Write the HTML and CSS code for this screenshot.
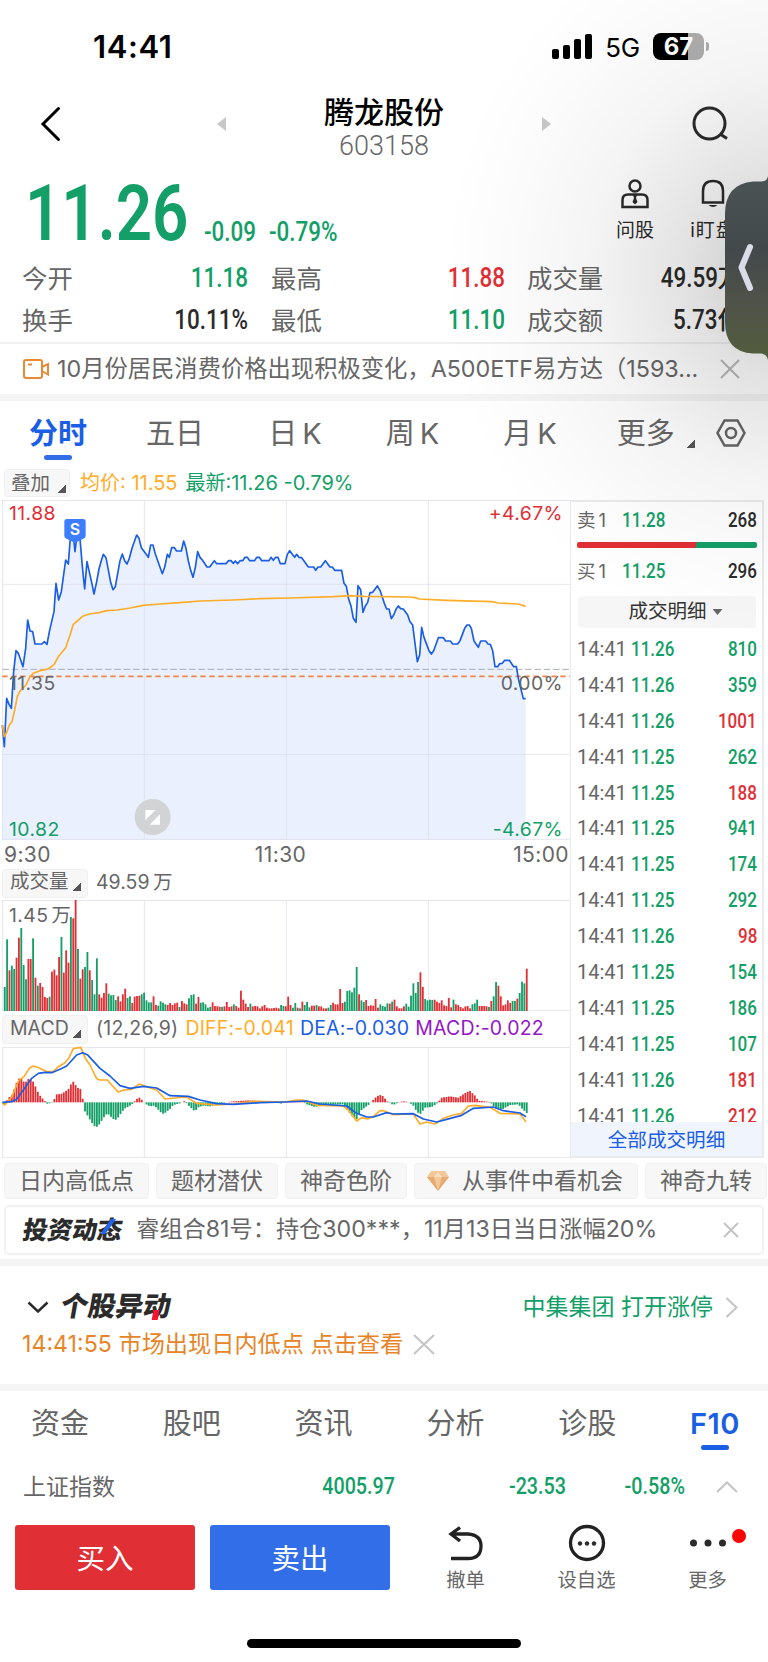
FILE: index.html
```html
<!DOCTYPE html>
<html lang="zh-CN">
<head>
<meta charset="UTF-8">
<title>腾龙股份 603158</title>
<link rel="stylesheet" href="styles.css">
</head>
<body>
<div class="phone">
  <!-- ============  Status bar  ============ -->
  <div class="status">
    <span class="clock">14:41</span>
    <div class="signal"><i></i><i></i><i></i><i></i></div>
    <span class="net">5G</span>
    <div class="battery"><span>67</span></div>
    <i class="battery-tip"></i>
  </div>

  <!-- ============  Title  ============ -->
  <header class="head">
    <svg class="back" width="22" height="36" viewBox="0 0 22 36"><path d="M18.500 2.500 L3 18 L18.500 33.500"/></svg>
    <i class="prev"></i>
    <div class="title">
      <h1>腾龙股份</h1>
      <span>603158</span>
    </div>
    <i class="next"></i>
    <svg class="search" width="38" height="36" viewBox="0 0 38 36"><circle cx="17.500" cy="17.500" r="15.500"/><path d="M28 28 L35 32.500"/></svg>
  </header>

  <!-- ============  Quote  ============ -->
  <section class="quote">
    <div class="price-row">
      <b class="price din">11.26</b>
      <span class="chg din">-0.09</span>
      <span class="chg din">-0.79%</span>
      <div class="tools">
        <div class="tool">
          <svg width="28" height="30" viewBox="0 0 28 30"><circle cx="14" cy="7" r="5.500"/><path d="M1.500 28 V21 Q1.500 15.500 7 15.500 H21 Q26.500 15.500 26.500 21 V28 Z"/><path class="solid" d="M12 16h4l-1 3 1.500 4L14 25.500 11.500 23 13 19z"/></svg>
          <span>问股</span>
        </div>
        <div class="tool">
          <svg width="28" height="30" viewBox="0 0 28 30"><path d="M4 23.500 V12 Q4 2 14 2 Q24 2 24 12 V23.500 Z"/><path class="solid" d="M9.500 26h9q-4.500 4-9 0z"/></svg>
          <span class="watch">i盯盘</span>
        </div>
      </div>
    </div>
    <div class="stats">
      <span>今开</span><b class="din down">11.18</b>
      <span>最高</span><b class="din up">11.88</b>
      <span>成交量</span><b><i class="din">49.59</i>万</b>
      <span>换手</span><b class="din">10.11%</b>
      <span>最低</span><b class="din down">11.10</b>
      <span>成交额</span><b><i class="din">5.73</i>亿</b>
    </div>
  </section>

  <div class="news">
    <svg width="27" height="20" viewBox="0 0 27 20"><rect x="1" y="1" width="18" height="18" rx="2"/><path d="M5 5.500h4M19 8 L25 5 V15.500 L19 12"/></svg>
    <p>10月份居民消费价格出现积极变化，A500ETF易方达（1593...</p>
    <svg class="close" width="20" height="20" viewBox="0 0 20 20"><path d="M1 1 L19 19 M19 1 L1 19"/></svg>
  </div>
  <div class="band"></div>

  <!-- ============  Chart tabs  ============ -->
  <nav class="tabs periods">
    <a class="on">分时</a><a>五日</a><a>日<em>K</em></a><a>周<em>K</em></a><a>月<em>K</em></a>
    <a class="more">更多<i class="corner"></i></a>
    <svg width="30" height="28" viewBox="0 0 30 28"><path d="M8.500 1.500 H21.500 L28.500 14 L21.500 26.500 H8.500 L1.500 14 Z"/><circle cx="15" cy="14" r="5"/></svg>
  </nav>
  <div class="legend">
    <span class="pill overlay">叠加<i class="corner"></i></span>
    <span class="avg">均价: 11.55</span>
    <span class="down">最新:11.26 -0.79%</span>
  </div>

  <!-- ============  Charts + trades  ============ -->
  <div class="market">
    <div class="charts">
      <svg class="chart price-chart" viewBox="0 15 1713 1020">
        <polygon id="area" class="area"/>
        <path class="grid" d="M7 16.500H1713M7 268H1713M7 778H1713M7 1033H1713M8 15V1035M433 15V1035M859 15V1035M1285 15V1035"/>
        <path class="mid" d="M7 523H1713"/>
        <path class="prev-close" d="M7 544H1713"/>
        <polyline id="price" class="line blue"/>
        <polyline class="line orange" points="7,690 13,725 20,712 28,690 36,680 44,645 52,605 60,588 78,570 90,545 100,535 120,527 141,523 152,517 163,507 175,485 197,458 210,420 220,388 232,378 248,364 268,357 297,353 320,347 352,345 390,339 430,331 480,327 540,323 600,318 700,315 780,311 870,309 1000,305 1050,302 1090,304 1230,306 1245,308 1258,312 1340,316 1475,320 1495,324 1555,327 1577,334"/>
        <path class="flag" d="M201 72H249Q257 72 257 80V122Q257 129 250 131L225 144L200 131Q193 129 193 122V80Q193 72 201 72Z"/>
        <text class="flag-text" x="225" y="120" text-anchor="middle">S</text>
        <text class="t" x="27" y="586">11.35</text>
        <text class="t up" x="27" y="74">11.88</text>
        <text class="t down" x="27" y="1023">10.82</text>
        <text class="t up" x="1689" y="74" text-anchor="end">+4.67%</text>
        <text class="t" x="1689" y="586" text-anchor="end">0.00%</text>
        <text class="t down" x="1689" y="1023" text-anchor="end">-4.67%</text>
        <circle class="zoom-bg" cx="458" cy="966" r="54"/>
        <path class="zoom-icon" d="M436 945H467L436 976ZM480 958V989H449Z"/>
      </svg>
      <div class="axis"><span>9:30</span><span>11:30</span><span>15:00</span></div>

      <div class="sub-head vol-head">
        <span class="pill">成交量<i class="corner"></i></span><span>49.59 万</span>
      </div>
      <svg class="chart vol-chart" viewBox="0 480 1713 333">
        <path class="grid" d="M7 481.500H1713M7 811.500H1713M8 480V813M433 480V813M859 480V813M1285 480V813"/>
        <text class="t" x="27" y="545">1.45 万</text>
        <g id="volume"></g>
      </svg>

      <div class="sub-head macd-head">
        <span class="pill">MACD<i class="corner"></i></span><span>(12,26,9)</span>
        <span class="avg">DIFF:-0.041</span><span class="dea">DEA:-0.030</span><span class="macd">MACD:-0.022</span>
      </div>
      <svg class="chart macd-chart" viewBox="0 921 1713 333">
        <path class="grid" d="M7 922.500H1713M7 1252H1713M8 921V1253M433 921V1253M859 921V1253M1285 921V1253"/>
        <g id="macd"></g>
        <polyline class="line orange" points="7,1087 14,1095 25,1083 36,1070 43,1052 57,1020 72,1010 88,985 100,978 118,984 140,995 160,995 175,980 195,968 207,953 220,926 242,922 256,955 270,975 290,1016 300,1020 322,1020 354,1056 372,1050 395,1048 418,1032 440,1040 470,1050 495,1077 525,1074 560,1071 590,1090 650,1095 700,1092 760,1084 855,1086 890,1080 910,1080 950,1096 1030,1098 1045,1110 1070,1143 1085,1133 1102,1137 1120,1130 1140,1112 1150,1112 1180,1124 1240,1122 1260,1152 1280,1146 1305,1152 1330,1135 1360,1125 1385,1120 1405,1098 1425,1096 1470,1102 1500,1120 1560,1122 1578,1146"/>
        <polyline class="line blue" points="7,1087 35,1085 50,1078 70,1050 95,1015 115,1000 135,997 155,998 180,988 200,978 230,945 248,938 262,944 300,985 330,1008 360,1037 390,1045 430,1039 470,1044 510,1067 565,1069 600,1080 650,1091 700,1093 780,1088 855,1086 920,1083 960,1092 1040,1098 1070,1120 1100,1131 1120,1131 1160,1118 1180,1122 1240,1121 1270,1137 1310,1146 1340,1138 1385,1126 1420,1105 1480,1101 1510,1112 1560,1119 1578,1130"/>
      </svg>
    </div>

    <aside class="side">
      <div class="level"><span>卖1</span><b class="din left down">11.28</b><b class="din">268</b></div>
      <div class="ratio"></div>
      <div class="level buy"><span>买1</span><b class="din left down">11.25</b><b class="din">296</b></div>
      <div class="detail">成交明细<i></i></div>
      <div class="trades" id="trades"></div>
      <a class="all">全部成交明细</a>
    </aside>
  </div>

  <div class="chips">
    <span>日内高低点</span><span>题材潜伏</span><span>神奇色阶</span>
    <span><svg width="22" height="20" viewBox="0 0 22 20"><path fill="#f3c797" d="M4 0h14l4 6-11 14L0 6z"/><path fill="#e5aa71" d="M0 6h7l4 14zM15 6h7L11 20z"/><path fill="#fbe0bd" d="M7 6l4-5 4 5z"/></svg>从事件中看机会</span>
    <span>神奇九转</span>
  </div>

  <div class="notice">
    <b class="logo invest">投资动态</b>
    <p>睿组合81号：持仓300***，11月13日当日涨幅20%</p>
    <svg class="close" width="16" height="16" viewBox="0 0 16 16"><path d="M1 1 L15 15 M15 1 L1 15"/></svg>
  </div>
  <div class="band"></div>

  <!-- ============  Unusual moves  ============ -->
  <section class="moves">
    <div class="moves-row">
      <svg width="22" height="12" viewBox="0 0 22 12"><path d="M1.500 1.500 L11 10.500 L20.500 1.500"/></svg>
      <b class="logo unusual">个股异动</b>
      <span class="down">中集集团 打开涨停</span>
      <svg class="close" width="13" height="21" viewBox="0 0 13 21"><path d="M1.500 1 L11.500 10.500 L1.500 20"/></svg>
    </div>
    <div class="alert">
      14:41:55 市场出现日内低点 点击查看
      <svg class="close" width="22" height="21" viewBox="0 0 22 21"><path d="M1 1 L21 20 M21 1 L1 20"/></svg>
    </div>
  </section>
  <div class="band"></div>

  <nav class="tabs info">
    <a>资金</a><a>股吧</a><a>资讯</a><a>分析</a><a>诊股</a><a class="on">F10</a>
  </nav>
  <div class="index-row">
    <span>上证指数</span>
    <b class="din down">4005.97</b><b class="din down">-23.53</b><b class="din down">-0.58%</b>
    <svg class="close" width="22" height="12" viewBox="0 0 22 12"><path d="M1 11 L11 1.500 L21 11"/></svg>
  </div>

  <!-- ============  Bottom actions  ============ -->
  <footer class="actions">
    <button class="buy-btn">买入</button>
    <button class="sell-btn">卖出</button>
    <div class="act">
      <svg width="38" height="38" viewBox="0 0 38 38"><path d="M13 3.500 L4 10 L13 17 M4 10 H21 Q34 11 34 22 Q34 34.500 21 34.500 H4"/></svg>
      <span>撤单</span>
    </div>
    <div class="act">
      <svg width="38" height="38" viewBox="0 0 38 38"><circle cx="19" cy="19" r="16.500"/><g class="solid"><circle cx="12" cy="19.500" r="2.200"/><circle cx="19" cy="19.500" r="2.200"/><circle cx="26" cy="19.500" r="2.200"/></g></svg>
      <span>设自选</span>
    </div>
    <div class="act">
      <svg width="38" height="38" viewBox="0 0 38 38"><g class="solid"><circle cx="4.500" cy="19" r="3.500"/><circle cx="19" cy="19" r="3.500"/><circle cx="33.500" cy="19" r="3.500"/></g></svg>
      <span>更多</span>
      <i class="badge"></i>
    </div>
  </footer>
  <div class="home"></div>

  <!-- floating drawer handle on the right edge -->
  <div class="shade"></div>
  <svg class="drawer" width="43" height="184" viewBox="0 0 43 184">
    <defs><linearGradient id="dg" x1="0" y1="0" x2="0" y2="1"><stop offset="0" stop-color="#4a5354"/><stop offset=".4" stop-color="#43494b"/><stop offset=".7" stop-color="#505349"/><stop offset="1" stop-color="#525d3c"/></linearGradient></defs>
    <path fill="url(#dg)" d="M43 0 Q42 5.500 36 5.500 H28 Q0 8 0 38 V146 Q0 176 28 177.500 H36 Q42 178 43 184Z"/>
    <path class="handle" d="M25 71 L16.500 91.500 L25 112"/>
  </svg>
</div>

<script src="script.js"></script>
</body>
</html>
```
FILE: styles.css
```css
/* base */
*{ box-sizing:border-box }
body{
  margin:0;
  background:#fff;
  color:#666;
  font-family: Inter, "Noto Sans CJK SC", sans-serif;
  line-height:1;
}
h1, p{ margin:0; font-weight:400 }
i, em{ font-style:normal }
svg{ display:block; flex:none; fill:none }
.phone{
  position:relative;
  width:768px;
  height:1662px;
  overflow:hidden;
}
.up{ color:#e12f35; fill:#e12f35 }
.down{ color:#139f67; fill:#139f67 }
.avg{ color:#ffac27 }
.dea{ color:#1a5ee6 }
.macd{ color:#9416c7 }

/* narrow digits */
.din{
  display:inline-block;
  font-family: Roboto, sans-serif;
  font-weight:500;
  transform:scaleX(.83);
  transform-origin:right;
}
.left{ transform-origin:left }
.close{ stroke:#c4c4c4; stroke-width:2 }
.band{ height:7px; background:#f4f4f5 }

/* small triangle in the bottom right of a button */
.corner{
  width:8px;
  height:8px;
  background:linear-gradient(135deg, transparent 50%, #555 50%);
}

/* status bar */
.status{
  display:flex;
  align-items:center;
  height:92px;
  padding:0 59px 0 93px;
  color:#000;
}
.clock{ font-size:31px; font-weight:600; letter-spacing:.6px; margin-right:auto }
.signal{ display:flex; align-items:flex-end; gap:4px; height:25px }
.signal i{ width:7px; height:10px; border-radius:2px; background:#000 }
.signal i:nth-child(2){ height:14px }
.signal i:nth-child(3){ height:20px }
.signal i:nth-child(4){ height:25px }
.net{ font-size:26px; margin:3px 13px 0 13px; letter-spacing:-.2px }
.battery{
  width:51px;
  height:27px;
  border-radius:8px;
  background:linear-gradient(90deg, #000 68%, #aeaeae 68%);
  color:#fff;
  font-size:24px;
  font-weight:700;
  line-height:27px;
  text-align:center;
}
.battery-tip{ width:3px; height:9px; margin-left:2px; border-radius:0 3px 3px 0; background:#aeaeae }

/* header */
.head{
  display:flex;
  align-items:center;
  height:78px;
  padding:0 38px 0 40px;
}
.back{ stroke:#000; stroke-width:3; margin-top:-15px; stroke-linecap:round }
.search{ stroke:#2b2b2b; stroke-width:3; margin-top:-15px; margin-left:auto }
.prev, .next{
  width:9px;
  height:14px;
  margin-top:-14px;
  background:#c8c8c8;
  clip-path:polygon(100% 0, 100% 100%, 0 50%);
}
.prev{ margin-left:155px }
.next{ margin-left:98px; clip-path:polygon(0 0, 100% 50%, 0 100%) }
.title{ width:120px; margin-left:98px; text-align:center; white-space:nowrap; margin-top:-5px }
.title h1{ font-size:30px; font-weight:500; color:#000; margin-bottom:6px }
.title span{ font-family:Roboto, sans-serif; font-size:27px; font-weight:300; letter-spacing:0 }

/* quote */
.quote{ height:174px; border-bottom:2px solid #f0f0f0 }
.price-row{ display:flex; align-items:flex-end; height:85px; padding-left:25px }
.price{
  width:179px;
  font-size:78px;
  font-weight:600;
  color:#139f67;
  transform:scaleX(.815);
  transform-origin:left;
  margin-bottom:2px;
}
.chg{
  font-size:27px;
  color:#139f67;
  transform-origin:left;
  margin-bottom:9px;
  width:65px;
}
.tools{ display:flex; gap:40px; margin-left:282px; align-self:flex-start; padding-top:9px }
.tool{
  width:38px;
  display:flex;
  flex-direction:column;
  align-items:center;
  gap:12px;
  color:#2b2b2b;
  font-size:19px;
  white-space:nowrap;
}
.tool svg{ stroke:#2b2b2b; stroke-width:2.500 }
.watch{ letter-spacing:1px }
.solid{ fill:#2b2b2b; stroke:none }
.stats{
  display:grid;
  grid-template-columns:80px 146px 100px 134px 100px 118px;
  grid-auto-rows:41.500px;
  align-items:center;
  padding:3px 0 0 22px;
  font-size:25.400px;
}
.stats b{ text-align:right; font-weight:500; white-space:nowrap }
.stats b:not(.up):not(.down){ color:#2b2b2b }
.stats .din{ font-size:27px }
.stats > span:nth-child(3), .stats > span:nth-child(9){ padding-left:23px }
.stats > span:nth-child(5), .stats > span:nth-child(11){ padding-left:45px; white-space:nowrap }
.stats > b:nth-child(4), .stats > b:nth-child(10){ margin-right:-23px }
.stats > b:nth-child(6), .stats > b:nth-child(12){ margin-right:-43px }

.news{
  display:flex;
  align-items:center;
  height:50px;
  padding:0 28px 0 23px;
  font-size:23.300px;
}
.news svg{ stroke:#e88a35; stroke-width:2 }
.news p{ margin-left:7px; white-space:nowrap; width:640px }
.news .close{ stroke:#b8b8b8; margin-left:auto }

/* tabs */
.tabs{
  display:flex;
  align-items:center;
  justify-content:space-between;
  height:66px;
  padding:0 22px 0 29px;
  font-size:29px;
}
.tabs a{ position:relative }
.tabs em{ margin-left:5px }
.tabs .on{ color:#1a5ee6; font-weight:600 }
.tabs .on::after{
  content:"";
  position:absolute;
  left:50%;
  top:36px;
  width:28px;
  height:5px;
  margin-left:-14px;
  border-radius:3px;
  background:#326ee8;
}
.tabs svg{ stroke:#666; stroke-width:2.500; margin-left:-43px }
.periods{ padding-bottom:2px }
.periods .on{ margin-right:-5px }
.more{ display:flex; align-items:flex-end; gap:12px; margin-left:-4px }

.pill{
  display:flex;
  align-items:flex-end;
  background:#f7f7f7;
  border:1px solid #f0f0f0;
  border-radius:4px;
}
.legend{
  display:flex;
  align-items:center;
  gap:8px;
  height:33px;
  padding:0 0 1px 4px;
  font-size:20px;
}
.overlay{ width:66px; height:28px; padding:4px 3px 3px 6px; justify-content:space-between; margin-right:2px; font-size:19.500px }

/* charts */
.market{ display:flex; height:658px }
.charts{ width:570px }
.chart{ width:571px; overflow:visible }
.price-chart{ height:340px }
.vol-chart, .macd-chart{ height:111px }
.grid{ stroke:#dcdfe5; stroke-width:3; stroke-opacity:.75 }
.area{ fill:#eaf0fe }
.line{ stroke-width:5; stroke-linejoin:round }
.blue{ stroke:#1a5ee6 }
.orange{ stroke:#ffac27 }
.mid{ stroke:#a9afb8; stroke-width:3; stroke-dasharray:20 8 }
.prev-close{ stroke:#f58345; stroke-width:5; stroke-dasharray:16 11 }
.t{ font-size:58px; letter-spacing:1.300px; word-spacing:-8px }
.t:not(.up):not(.down){ fill:#666 }
.flag{ fill:#3d7dff }
.flag-text{ fill:#fff; font-size:48px; font-weight:600 }
.zoom-bg{ fill:#cfcfcf; fill-opacity:.9 }
.zoom-icon{ fill:#fff }
.bar-up{ fill:#e12f35 }
.bar-down{ fill:#139f67 }
.axis{
  display:flex;
  justify-content:space-between;
  align-items:center;
  height:28px;
  padding:1px 1px 0 4px;
  font-size:21px;
  letter-spacing:.4px;
}
.axis span:nth-child(2){ margin-right:3px }
.sub-head{
  display:flex;
  align-items:center;
  height:32px;
  padding:0 0 2px 2px;
  font-size:19.500px;
  white-space:nowrap;
  word-spacing:-2px;
}
.sub-head .pill{ width:86px; height:29px; padding:4px 6px 5px 7px; justify-content:space-between; margin-right:8px }
.sub-head .corner{ margin-bottom:1px }
.macd-head{ height:36px; letter-spacing:.2px; padding-bottom:0 }
.macd-head .pill{ padding-bottom:4px; letter-spacing:0 }
.macd-head .avg{ margin-left:7px }
.macd-head .dea, .macd-head .macd{ margin-left:6px }

/* order book and trades */
.side{
  display:flex;
  flex-direction:column;
  width:194px;
  border:2px solid #e9eaec;
  border-left-width:1.500px;
}
.level{
  display:grid;
  grid-template-columns:45px 1fr auto;
  align-items:center;
  height:40px;
  padding:0 5px 4px 6px;
  font-size:18.500px;
}
.level span{ letter-spacing:3px }
.level .din{ font-size:20.500px }
.level > b:last-child{ color:#2b2b2b }
.buy{ height:48px; padding-bottom:1px }
.ratio{
  flex:none;
  height:6px;
  margin:0 5px 0 6px;
  border-radius:2px;
  background:linear-gradient(105deg, #e12f35 66%, #139f67 66%);
}
.detail{
  display:flex;
  flex:none;
  justify-content:center;
  align-items:center;
  gap:6px;
  height:32px;
  margin:0 6px 3px 7px;
  padding-left:17px;
  border-radius:4px;
  background:#f6f6f6;
  color:#333;
  font-size:19.500px;
}
.detail i{ width:10px; height:6px; background:#666; clip-path:polygon(0 0, 100% 0, 50% 100%) }
.trades{ flex:1; min-height:0; overflow:hidden }
.trade{
  display:grid;
  grid-template-columns:54px 1fr auto;
  align-items:center;
  height:35.900px;
  padding:0 5px 0 6px;
  font:400 20px Roboto, sans-serif;
}
.trade .din{ font-size:20.500px; font-weight:500 }
.all{
  height:34px;
  background:#f0f4fd;
  color:#1a5ee6;
  font-size:19.600px;
  line-height:36px;
  text-align:center;
}

/* chips */
.chips{
  display:flex;
  gap:7px;
  padding:5px 0 0 4px;
  font-size:23px;
}
.chips span{
  display:flex;
  flex:none;
  align-items:center;
  gap:13px;
  height:36px;
  padding:0 14px;
  background:#f7f7f7;
  border:1px solid #f1f1f1;
  border-radius:4px;
}
.chips span:nth-child(4){ padding:0 14px 0 12px }

.notice{
  display:flex;
  align-items:center;
  height:50px;
  margin:6px 4px 4px;
  padding:0 23px 0 17px;
  border:2px solid #f1f1f1;
  border-radius:5px;
  font-size:23.200px;
}
.notice p{ margin-left:14px; white-space:nowrap }
.notice .close{ margin-left:auto }
.logo{
  position:relative;
  color:#2b2b2b;
  font-weight:900;
  transform:skewX(-10deg);
  white-space:nowrap;
}
.invest{ font-size:24.800px }
.invest::after{
  content:"";
  position:absolute;
  right:12px;
  top:1px;
  width:5px;
  height:15px;
  background:#1f65f5;
  transform:skewX(-28deg);
}
.unusual{ font-size:27.500px; margin-left:12px }
.unusual::after{
  content:"";
  position:absolute;
  right:11px;
  bottom:1px;
  width:6px;
  height:10px;
  background:#f5142f;
}

/* unusual moves */
.moves{ height:118px; padding:22px 30px 0 27px }
.moves-row{ display:flex; align-items:center; height:38px; font-size:23px }
.moves-row > svg:first-child{ stroke:#2b2b2b; stroke-width:2.500 }
.moves-row .down{ margin-left:auto; margin-right:12px }
.alert{
  display:flex;
  align-items:center;
  gap:10px;
  height:37px;
  margin-left:-5px;
  color:#e78428;
  font-size:23.200px;
}

.info{ padding:0 28px 0 31px; height:64px }
.info .on{ letter-spacing:.5px }
.info .on::after{ background:#1a5ee6 }
.index-row{
  display:grid;
  grid-template-columns:200px 172px 171px 119px 1fr;
  align-items:center;
  height:64px;
  padding:0 30px 0 23px;
  font-size:23px;
}
.index-row b{ text-align:right; font-size:23.500px; transform:scaleX(.84) }
.index-row svg{ margin-left:auto }

/* bottom actions */
.actions{ display:flex; height:71px; padding:6px 0 0 15px }
.actions button{
  width:180px;
  height:65px;
  margin-right:15px;
  padding:0 0 3px;
  border:0;
  border-radius:3px;
  color:#fff;
  font:400 28.500px Inter, "Noto Sans CJK SC", sans-serif;
}
.buy-btn{ background:#e02f35 }
.sell-btn{ background:#326ee8 }
.act{
  position:relative;
  display:flex;
  flex-direction:column;
  align-items:center;
  gap:9px;
  width:121px;
  margin-top:-1px;
  font-size:19.300px;
}
.act svg{ stroke:#222; stroke-width:3.300 }
.badge{
  position:absolute;
  right:22px;
  top:5px;
  width:14px;
  height:14px;
  border-radius:50%;
  background:#f00;
}
.home{
  width:274px;
  height:9px;
  margin:49px 0 0 247px;
  border-radius:5px;
  background:#000;
}

/* drawer */
.shade{
  position:absolute;
  right:0;
  top:0;
  width:400px;
  height:640px;
  background:radial-gradient(ellipse 340px 370px at 412px 275px, rgba(0,0,0,.22), rgba(0,0,0,.115) 28%, rgba(0,0,0,.045) 56%, rgba(0,0,0,.015) 80%, transparent);
}
.drawer{ position:absolute; right:0; top:176px }
.handle{ stroke:#dadde8; stroke-width:6; stroke-linecap:round; stroke-linejoin:round }
```
FILE: script.js
```js
// chart coordinates run at three units per pixel
const STEP = 7.086;
const NS = 'http://www.w3.org/2000/svg';

const price = '7,690 13,755 20,610 27,628 34,640 41,530 48,467 55,475 62,495 69,515 77,460 83,375 90,408 98,410 105,447 126,447 133,440 141,448 148,410 162,350 168,265 176,315 184,290 197,195 205,207 210,140 218,100 225,170 232,110 240,130 247,215 254,282 261,200 275,262 282,297 289,265 297,222 303,200 310,178 318,188 332,262 339,284 346,275 360,197 367,177 374,197 381,207 388,190 396,160 410,120 417,130 424,158 438,177 445,187 452,150 459,150 466,177 480,217 487,236 494,217 502,178 508,187 515,158 523,158 530,168 544,168 551,138 558,160 565,198 572,226 579,247 586,217 593,170 600,187 607,195 621,216 629,216 643,197 650,206 678,206 686,197 693,197 700,205 706,198 713,206 720,197 728,197 735,187 742,187 749,197 764,197 770,187 778,187 785,197 807,197 813,187 820,196 827,187 834,187 841,206 855,206 862,178 869,167 877,178 884,187 890,178 897,187 905,188 925,216 941,216 947,226 954,216 962,216 976,197 990,216 997,216 1004,226 1025,226 1032,265 1039,274 1046,312 1053,333 1060,370 1068,382 1074,272 1082,284 1089,352 1096,333 1103,322 1110,293 1118,292 1132,273 1140,286 1153,325 1160,342 1167,342 1174,371 1181,360 1189,341 1195,333 1202,341 1210,342 1223,360 1230,380 1238,390 1245,445 1252,500 1259,480 1265,397 1272,427 1280,448 1287,467 1294,477 1301,467 1315,428 1330,428 1337,438 1351,438 1358,447 1373,447 1380,437 1394,400 1401,390 1408,390 1414,400 1422,438 1435,457 1442,438 1457,438 1464,447 1471,448 1478,467 1485,515 1493,515 1499,506 1507,505 1514,496 1528,496 1541,515 1549,515 1556,555 1570,611 1577,611';
document.getElementById('price').setAttribute('points', price);
document.getElementById('area').setAttribute('points', price + ' 1577,1035 7,1035');

// one bar per minute, negative = falling minute
const volume = [-72,-215,122,-136,-126,160,220,-249,-138,-95,156,156,-218,100,-76,84,72,42,39,-43,
  118,124,107,162,-222,115,182,145,-282,278,333,-186,97,125,-132,-177,122,-93,-50,-158,
  50,40,54,83,-52,-47,-48,-33,44,29,50,67,-39,-44,24,43,45,46,-50,-55,
  -32,-26,-26,44,18,-16,-29,-25,-20,18,24,18,23,25,-12,30,23,20,-38,-48,
  -50,22,42,-25,-26,-20,-10,-12,26,15,14,13,-12,14,27,12,14,-20,15,10,
  61,34,22,12,-22,14,15,14,8,14,18,10,8,8,9,10,8,-18,-15,14,
  43,18,-10,-24,10,-8,28,-18,-27,-11,16,16,-18,14,14,8,8,-10,-18,25,
  20,20,66,24,-28,-60,-62,-56,-70,-132,50,-32,-27,33,15,17,16,36,10,-20,
  -15,-13,-23,22,-28,34,14,8,8,14,-22,-13,-46,-83,-54,-87,116,72,-36,-32,
  -34,-33,34,28,24,32,17,15,39,11,-34,20,18,12,8,14,15,8,-20,-23,
  -34,15,15,15,14,-12,30,-44,-87,76,44,17,20,32,24,-30,-30,37,-54,-88,-83,127];

function bar(group, i, y, h, up) {
  const r = document.createElementNS(NS, 'rect');
  r.setAttribute('x', (11.5 + i * STEP).toFixed(1));
  r.setAttribute('y', y);
  r.setAttribute('width', 5.5);
  r.setAttribute('height', h);
  r.setAttribute('class', up ? 'bar-up' : 'bar-down');
  document.getElementById(group).appendChild(r);
}
volume.forEach((v, i) => bar('volume', i, 813 - Math.abs(v), Math.abs(v), v > 0));

// MACD histogram, [x, height] interpolated between the turning points
const hist = [[14,-8],[21,6],[28,16],[36,22],[43,40],[50,60],[57,72],[64,70],[71,62],[78,62],[85,70],[92,68],[99,62],[106,48],[113,32],[120,20],[134,4],[141,-4],[155,-2],[162,8],[169,24],[183,25],[204,38],[218,64],[232,44],[241,40],[248,10],[254,-26],[267,-48],[281,-70],[288,-75],[295,-70],[316,-38],[323,-34],[344,-54],[351,-50],[372,-20],[393,-8],[400,-2],[407,8],[417,15],[428,5],[435,-4],[449,-12],[463,-10],[484,-32],[491,-35],[512,-18],[519,-8],[540,-3],[554,4],[568,-12],[584,-27],[596,-14],[610,-10],[631,-12],[655,-5],[690,2],[745,6],[800,3],[845,-4],[862,3],[900,6],[920,-6],[945,-14],[970,-8],[1030,-6],[1040,-20],[1055,-40],[1066,-50],[1072,-50],[1080,-26],[1105,-8],[1113,1],[1130,18],[1140,22],[1150,18],[1160,4],[1180,-8],[1200,2],[1215,3],[1230,-2],[1240,-10],[1250,-28],[1260,-36],[1275,-16],[1295,-14],[1310,-4],[1325,14],[1350,18],[1375,14],[1395,28],[1410,34],[1425,20],[1435,5],[1470,1],[1485,-16],[1505,-22],[1530,-8],[1555,-6],[1565,-18],[1580,-32]];
for (let i = 0, k = 0; i <= 221; i++) {
  const x = 14 + i * STEP;
  while (k < hist.length - 2 && hist[k + 1][0] < x) k++;
  const [x1, h1] = hist[k], [x2, h2] = hist[k + 1];
  const h = h1 + (h2 - h1) * (x - x1) / (x2 - x1);
  bar('macd', i, h > 0 ? 1087 - h : 1087, Math.abs(h), h > 0);
}

// latest trades: price, lots, side
const trades = [['11.26',810,'down'],['11.26',359,'down'],['11.26',1001,'up'],['11.25',262,'down'],
  ['11.25',188,'up'],['11.25',941,'down'],['11.25',174,'down'],['11.25',292,'down'],['11.26',98,'up'],
  ['11.25',154,'down'],['11.25',186,'down'],['11.25',107,'down'],['11.26',181,'up'],['11.26',212,'up']];
document.getElementById('trades').innerHTML = trades.map(([p, n, side]) =>
  `<div class="trade"><span>14:41</span><b class="din left down">${p}</b><b class="din ${side}">${n}</b></div>`).join('');
```
